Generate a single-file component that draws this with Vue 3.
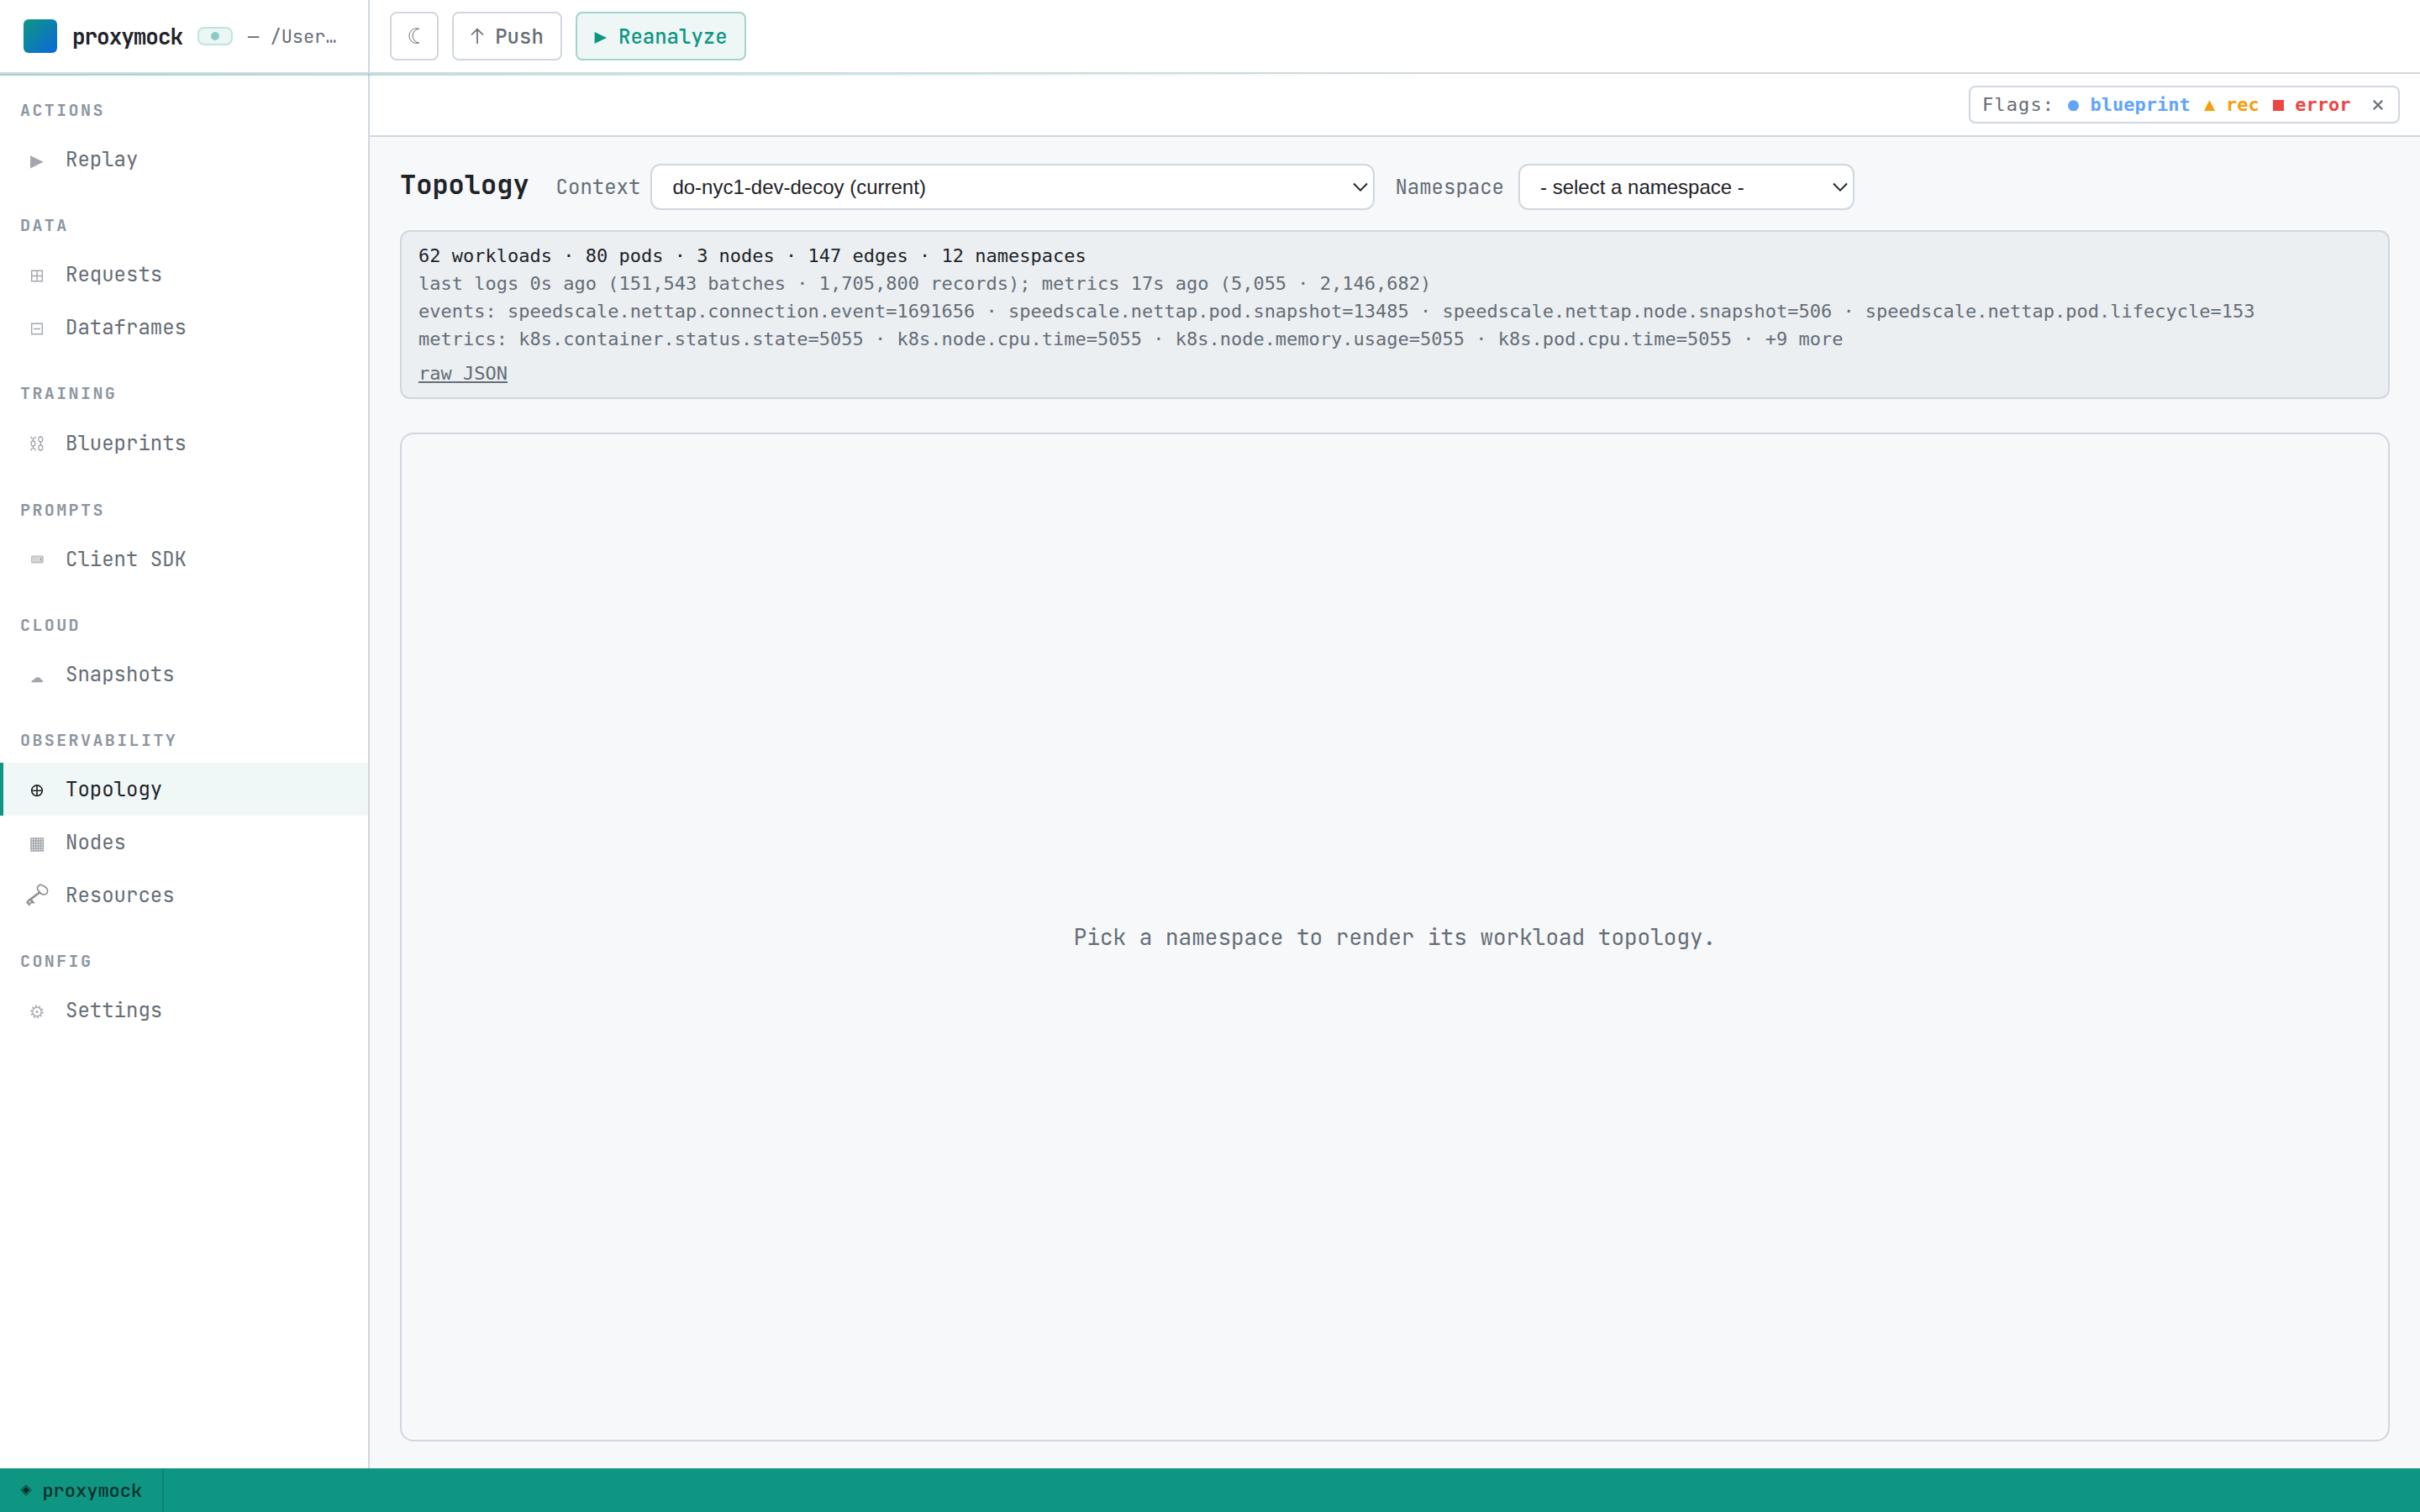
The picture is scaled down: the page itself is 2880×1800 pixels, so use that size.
<template>
  <div class="app">
    <header class="topbar">
      <div class="brand">
        <span class="brand-logo"></span>
        <span class="brand-name">proxymock</span>
        <span class="brand-badge"><i class="badge-dot"></i></span>
        <span class="brand-path">— /User…</span>
      </div>
      <div class="actions">
        <button class="btn btn-icon">
          <svg width="24" height="24" viewBox="0 0 24 24" fill="none" stroke="currentColor" stroke-width="1">
            <path d="M17.6 3.3A8.8 8.8 0 1 0 17.6 20A8.4 8.4 0 0 1 17.6 3.3Z" />
          </svg>
        </button>
        <button class="btn">
          <svg class="btn-glyph" width="16" height="20" viewBox="0 0 16 20" fill="none" stroke="currentColor" stroke-width="1.7">
            <path d="M8 19V2M1 8.5L8 1.8L15 8.5" />
          </svg>
          <span>Push</span>
        </button>
        <button class="btn btn-accent">
          <svg class="btn-glyph" width="16" height="20" viewBox="0 0 16 20" fill="currentColor">
            <path d="M0.6 5L15 12L0.6 19Z" />
          </svg>
          <span>Reanalyze</span>
        </button>
      </div>
      <div class="topbar-glow"></div>
    </header>

    <div class="body">
      <aside class="sidebar">
        <section v-for="group in groups" :key="group.title" class="nav-group">
          <div class="nav-title">{{ group.title }}</div>
          <a
            v-for="item in group.items"
            :key="item.name"
            class="nav-item"
            :class="{ active: item.name === current, tall: item.icon === 'chain' }"
            @click="current = item.name"
          >
            <svg class="nav-icon" width="28" height="28" viewBox="0 0 28 28" fill="none" stroke="currentColor" stroke-width="1.4">
              <path v-if="item.icon === 'play'" d="M6 9.2L21.7 16.8L6 24.5Z" fill="currentColor" stroke="none" />
              <path v-else-if="item.icon === 'plus-box'" d="M7.7 9.2H20.3V21.8H7.7ZM14 9.2V21.8M7.7 15.5H20.3" />
              <path v-else-if="item.icon === 'minus-box'" d="M7.7 9.2H20.3V21.8H7.7ZM10 15.5H18" />
              <g v-else-if="item.icon === 'chain'" stroke-width="1.3">
                <path d="M6.8 5.5Q7 8.2 9.5 8.2Q12 8.2 12.2 5.5M9.5 7.5V12M9.5 16V20.5M6.8 22.5Q7 19.6 9.5 19.6Q12 19.6 12.2 22.5" />
                <ellipse cx="9.5" cy="14" rx="2.5" ry="3" />
                <ellipse cx="18.3" cy="9" rx="2.5" ry="3" />
                <ellipse cx="18.3" cy="19" rx="2.5" ry="3" />
                <path d="M18.3 11V17M18.3 5.3V7M18.3 21V22.7" />
              </g>
              <g v-else-if="item.icon === 'keyboard'" stroke="none">
                <rect x="7" y="9.5" width="14.7" height="9" rx="1.6" fill="#b9bcc1" />
                <rect x="8.6" y="10.8" width="11.2" height="5.8" fill="#dcdee1" />
                <path d="M9.2 11.8h8M9.2 13.4h7M11 15.2h5" stroke="#c3c6ca" stroke-width="0.7" />
                <path d="M18.6 12v1.6M17.2 14.6h1.8" stroke="#777" stroke-width="0.9" />
              </g>
              <path v-else-if="item.icon === 'cloud'" d="M7 23.2Q7.6 20.7 10.4 20.1Q11.8 16.9 15 17.2Q18.2 17.4 18.6 19.8Q21.2 20 21 23.2Z" fill="currentColor" stroke="none" />
              <g v-else-if="item.icon === 'circle-plus'" stroke-width="1.6">
                <circle cx="14" cy="15.2" r="6.3" />
                <path d="M14 9V21.5M7.7 15.2H20.3" />
              </g>
              <path v-else-if="item.icon === 'grid'" d="M6.3 9.1H22M6.3 12.1H22M6.3 15.1H22M6.3 18H22M6.3 21H22M6.3 23.9H22M6.9 8.5V24.5M9.8 8.5V24.5M12.7 8.5V24.5M15.6 8.5V24.5M18.5 8.5V24.5M21.4 8.5V24.5" stroke-width="1.5" />
              <g v-else-if="item.icon === 'key'" stroke="#8f8c89">
                <path d="M16.5 9.4Q13 5.4 15.6 2.6Q18.6 0.2 21.8 2.8Q26.6 4.8 26.6 9Q26 13.3 21.6 12.9Q18.2 12.6 16.5 9.4Z" stroke-width="1.6" />
                <path d="M18 9.8L3 21" stroke-width="2.6" />
                <path d="M1.8 21.2L5.6 25.8M6.6 18.8L10.4 23.2M5.6 23.4L8.6 21.6" stroke-width="2.2" />
              </g>
              <g v-else-if="item.icon === 'gear'">
                <circle cx="14" cy="15.5" r="5.2" stroke-width="1.4" />
                <circle cx="14" cy="15.5" r="6.8" stroke-width="2" stroke-dasharray="1.9 2.372" />
                <circle cx="14" cy="15.5" r="1.5" fill="currentColor" stroke="none" />
              </g>
            </svg>
            <span>{{ item.name }}</span>
          </a>
        </section>
      </aside>

      <main class="main">
        <div class="flagbar">
          <div class="flags">
            <span class="flags-label">Flags:</span>
            <span v-for="flag in flags" :key="flag.name" class="flag" :class="flag.kind">
              <svg width="13" height="14" viewBox="0 0 13 14" fill="currentColor">
                <circle v-if="flag.kind === 'blueprint'" cx="6.5" cy="7.8" r="6.5" />
                <path v-else-if="flag.kind === 'rec'" d="M6.5 1L13 14H0Z" />
                <rect v-else y="1" width="13" height="13" />
              </svg>
              <span>{{ flag.name }}</span>
            </span>
            <svg class="flags-close" width="12" height="12" viewBox="0 0 12 12" fill="none" stroke="currentColor" stroke-width="2.2">
              <path d="M0.8 0.8L11.2 11.2M11.2 0.8L0.8 11.2" />
            </svg>
          </div>
        </div>

        <div class="content">
          <div class="head">
            <h1>Topology</h1>
            <label class="context-label">Context</label>
            <div class="select select-context">
              <span>do-nyc1-dev-decoy (current)</span>
              <svg width="18" height="12" viewBox="0 0 18 12" fill="none" stroke="currentColor" stroke-width="1.9">
                <path d="M1 1.5L9 9.7L17 1.5" />
              </svg>
            </div>
            <label class="ns-label">Namespace</label>
            <div class="select select-ns">
              <span>- select a namespace -</span>
              <svg width="18" height="12" viewBox="0 0 18 12" fill="none" stroke="currentColor" stroke-width="1.9">
                <path d="M1 1.5L9 9.7L17 1.5" />
              </svg>
            </div>
          </div>

          <div class="stats">
            <div class="stats-main">62 workloads · 80 pods · 3 nodes · 147 edges · 12 namespaces</div>
            <div v-for="line in statLines" :key="line">{{ line }}</div>
            <a class="raw">raw JSON</a>
          </div>

          <div class="canvas">Pick a namespace to render its workload topology.</div>
        </div>
      </main>
    </div>

    <footer class="statusbar">
      <div class="status-item">
        <svg width="14" height="14" viewBox="0 0 14 14" fill="none" stroke="currentColor">
          <path d="M7 0.8L13.2 7L7 13.2L0.8 7Z" stroke-width="1" />
          <path d="M7 2.6L11.4 7L7 11.4L2.6 7Z" fill="currentColor" stroke="none" />
        </svg>
        <span>proxymock</span>
      </div>
    </footer>
  </div>
</template>

<script setup>
import { ref } from 'vue';

const current = ref('Topology');

// sidebar navigation
const groups = [
  { title: 'ACTIONS', items: [{ name: 'Replay', icon: 'play' }] },
  {
    title: 'DATA',
    items: [
      { name: 'Requests', icon: 'plus-box' },
      { name: 'Dataframes', icon: 'minus-box' },
    ],
  },
  { title: 'TRAINING', items: [{ name: 'Blueprints', icon: 'chain' }] },
  { title: 'PROMPTS', items: [{ name: 'Client SDK', icon: 'keyboard' }] },
  { title: 'CLOUD', items: [{ name: 'Snapshots', icon: 'cloud' }] },
  {
    title: 'OBSERVABILITY',
    items: [
      { name: 'Topology', icon: 'circle-plus' },
      { name: 'Nodes', icon: 'grid' },
      { name: 'Resources', icon: 'key' },
    ],
  },
  { title: 'CONFIG', items: [{ name: 'Settings', icon: 'gear' }] },
];

const flags = [
  { name: 'blueprint', kind: 'blueprint' },
  { name: 'rec', kind: 'rec' },
  { name: 'error', kind: 'error' },
];

const statLines = [
  'last logs 0s ago (151,543 batches · 1,705,800 records); metrics 17s ago (5,055 · 2,146,682)',
  'events: speedscale.nettap.connection.event=1691656 · speedscale.nettap.pod.snapshot=13485 · speedscale.nettap.node.snapshot=506 · speedscale.nettap.pod.lifecycle=153',
  'metrics: k8s.container.status.state=5055 · k8s.node.cpu.time=5055 · k8s.node.memory.usage=5055 · k8s.pod.cpu.time=5055 · +9 more',
];
</script>

<style>
body {
  background: #f6f8fa;
}
</style>

<style scoped>
* {
  box-sizing: border-box;
}

.app {
  display: flex;
  flex-direction: column;
  height: 100vh;
  overflow: hidden;
  background: #f6f8fa;
  color: #1f2328;
  font-family: 'JetBrains Mono', 'DejaVu Sans Mono', 'Liberation Mono', monospace;
  font-size: 24px;
  white-space: nowrap;
}

svg {
  display: block;
  flex: none;
}

/* top bar */
.topbar {
  position: relative;
  display: flex;
  flex: none;
  height: 88px;
  background: #fff;
  border-bottom: 2px solid #d0d7de;
}

.topbar-glow {
  position: absolute;
  left: 0;
  right: 0;
  bottom: -4px;
  height: 2px;
  z-index: 2;
  background: linear-gradient(90deg, #0f9683, transparent 60%);
  opacity: 0.4;
}

.brand {
  display: flex;
  align-items: center;
  width: 440px;
  padding-left: 28px;
  border-right: 2px solid #d0d7e0;
}

.brand-logo {
  width: 40px;
  height: 40px;
  border-radius: 6px;
  background: linear-gradient(135deg, #0f9683, #0969da);
}

.brand-name {
  margin-left: 18px;
  font-size: 26px;
  font-weight: 700;
  letter-spacing: -1.04px;
}

.brand-badge {
  display: flex;
  align-items: center;
  justify-content: center;
  width: 42px;
  height: 22px;
  margin-left: 18px;
  background: #ecf6f4;
  border: 2px solid #bfe4de;
  border-radius: 8px;
}

.badge-dot {
  width: 10px;
  height: 10px;
  border-radius: 50%;
  background: #8bccc2;
}

.brand-path {
  margin-left: 18px;
  font-size: 22px;
  color: #656d76;
}

.actions {
  display: flex;
  align-items: center;
  gap: 16px;
  padding-left: 24px;
}

.btn {
  display: flex;
  align-items: center;
  height: 58px;
  padding: 0 20px;
  font: inherit;
  font-weight: 500;
  color: #656d76;
  background: #fff;
  border: 2px solid #d0d7e0;
  border-radius: 8px;
}

.btn-glyph {
  margin-right: 13.2px;
}

.btn-icon {
  justify-content: center;
  width: 58px;
  padding: 0;
}

.btn-accent {
  color: #0f9683;
  background: #eef7f6;
  border-color: #9fd5cd;
}

/* sidebar */
.body {
  display: flex;
  flex: 1;
  min-height: 0;
}

.sidebar {
  display: flex;
  flex-direction: column;
  flex: none;
  gap: 16px;
  width: 440px;
  padding-top: 12px;
  background: #fff;
  border-right: 2px solid #d0d7e0;
}

.nav-title {
  height: 58px;
  padding: 18px 0 0 24px;
  font-size: 20px;
  line-height: 26px;
  font-weight: 600;
  letter-spacing: 2.4px;
  color: #8c959f;
}

.nav-item {
  display: flex;
  align-items: center;
  height: 63px;
  padding-left: 26px;
  border-left: 4px solid transparent;
  color: #656d76;
  cursor: pointer;
}

.nav-item.tall {
  height: 65px;
}

.nav-item.active {
  color: #1f2328;
  background: #f0f8f7;
  border-left-color: #0f9683;
}

.nav-icon {
  margin-right: 20px;
  color: #a3a7ad;
}

.active .nav-icon {
  color: #1f2328;
}

/* main area */
.main {
  display: flex;
  flex-direction: column;
  flex: 1;
  min-width: 0;
}

.flagbar {
  display: flex;
  flex: none;
  align-items: center;
  justify-content: flex-end;
  height: 75px;
  padding-right: 24px;
  background: #fff;
  border-bottom: 2px solid #d0d7de;
}

.flags {
  display: flex;
  align-items: center;
  gap: 16px;
  width: 513px;
  height: 45px;
  padding: 0 18px 0 14px;
  font-family: 'DejaVu Sans Mono', Menlo, monospace;
  font-size: 22px;
  border: 2px solid #d0d7e0;
  border-radius: 8px;
}

.flags-label {
  color: #656d76;
  letter-spacing: 1.1px;
}

.flag {
  display: flex;
  align-items: center;
  gap: 13.4px;
  font-weight: 700;
}

.flag.blueprint {
  color: #60a5fa;
}

.flag.rec {
  color: #f59e0b;
}

.flag.error {
  color: #ef4444;
}

.flags-close {
  margin-left: auto;
  color: #656d76;
}

.content {
  display: flex;
  flex-direction: column;
  flex: 1;
  min-height: 0;
  padding: 32px 36px;
}

.head {
  display: flex;
  align-items: center;
  height: 55px;
  color: #656d76;
}

h1 {
  margin: 0;
  padding-bottom: 6px;
  font-size: 32px;
  color: #1f2328;
}

.context-label {
  margin: 0 12px 0 32px;
}

.ns-label {
  margin: 0 17px 0 24px;
}

.select {
  display: flex;
  align-items: center;
  justify-content: space-between;
  height: 55px;
  padding: 0 6px 0 24px;
  font-family: 'Liberation Sans', Arial, sans-serif;
  color: #1f2328;
  background: #fff;
  border: 2px solid #d0d7e0;
  border-radius: 12px;
}

.select-context {
  width: 862px;
}

.select-ns {
  width: 400px;
}

.stats {
  flex: none;
  height: 201px;
  margin-top: 24px;
  padding: 12px 20px;
  font-family: 'DejaVu Sans Mono', Menlo, monospace;
  font-size: 22px;
  line-height: 33px;
  color: #656d76;
  background: #ebeff2;
  border: 2px solid #d0d7e0;
  border-radius: 12px;
}

.stats-main {
  color: #1f2328;
}

.raw {
  display: inline-block;
  margin-top: 8px;
  text-decoration: underline;
  text-decoration-thickness: 2px;
  text-underline-offset: 2px;
}

.canvas {
  display: flex;
  align-items: center;
  justify-content: center;
  flex: 1;
  margin-top: 40px;
  font-size: 26px;
  color: #656d76;
  border: 2px solid #d0d7e0;
  border-radius: 16px;
}

/* bottom status bar */
.statusbar {
  display: flex;
  flex: none;
  height: 52px;
  font-size: 22px;
  font-weight: 500;
  color: #06302a;
  background: #0f9683;
}

.status-item {
  display: flex;
  align-items: center;
  gap: 12.4px;
  padding: 0 24px;
  border-right: 2px solid #0c8474;
}
</style>
